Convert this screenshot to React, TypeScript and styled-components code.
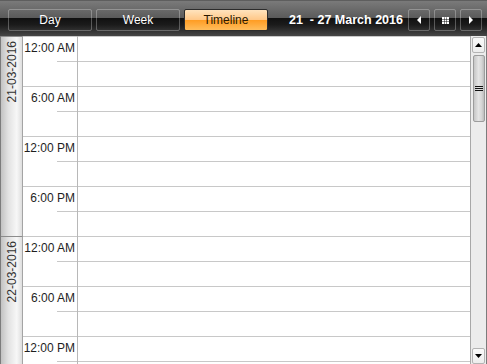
import React from 'react';
import styled, { createGlobalStyle, css } from 'styled-components';

const GlobalStyle = createGlobalStyle`
  html, body {
    margin: 0;
    padding: 0;
    background: #fff;
  }
  body {
    font-family: 'Liberation Sans', Arial, sans-serif;
  }
`;

const Frame = styled.div`
  width: 487px;
  height: 364px;
  overflow: hidden;
  display: flex;
  flex-direction: column;
  background: #fff;
`;

const Header = styled.div`
  height: 36px;
  flex: none;
  box-sizing: border-box;
  display: flex;
  align-items: flex-start;
  padding: 8px 5px 0 8px;
  background: linear-gradient(
    to bottom,
    #7a7a7a 0%,
    #5a5a5a 49%,
    #111111 50%,
    #1b1b1b 68%,
    #464646 100%
  );
  border-top: 1px solid #5e5e5e;
`;

const ViewButton = styled.div<{ $active?: boolean }>`
  width: 84px;
  height: 22px;
  box-sizing: border-box;
  margin-right: 4px;
  display: flex;
  align-items: center;
  justify-content: center;
  font-size: 12px;
  color: #fff;
  border: 1px solid rgba(255, 255, 255, 0.28);
  border-radius: 2px;
  ${(p) =>
    p.$active &&
    css`
      color: #2a1800;
      border-color: #2c2c2c;
      background: linear-gradient(
        to bottom,
        #ffe3bd 0%,
        #ffc889 48%,
        #ff9d24 52%,
        #ffbd5c 100%
      );
    `}
`;

const DateRange = styled.div`
  margin-left: 17px;
  height: 22px;
  display: flex;
  align-items: center;
  font-size: 12.5px;
  font-weight: bold;
  color: #fff;
  white-space: pre;
`;

const NavGroup = styled.div`
  margin-left: auto;
  display: flex;
  gap: 4px;
`;

const NavButton = styled.div`
  width: 22px;
  height: 22px;
  box-sizing: border-box;
  display: flex;
  align-items: center;
  justify-content: center;
  border: 1px solid rgba(255, 255, 255, 0.28);
  border-radius: 2px;
`;

const Body = styled.div`
  flex: 1;
  min-height: 0;
  display: flex;
  border-left: 1px solid #7c7c7c;
  border-right: 1px solid #7c7c7c;
`;

const Content = styled.div`
  flex: 1;
  overflow: hidden;
`;

const DayBlock = styled.div`
  display: flex;
`;

const DateCol = styled.div`
  width: 19px;
  flex: none;
  padding: 4px 0 0 2px;
  border-top: 1px solid #8c8c8c;
  border-right: 1px solid #a4a4a4;
  background: linear-gradient(
    to right,
    #c2c2c2 0%,
    #e2e2e2 35%,
    #f7f7f7 75%,
    #dedede 100%
  );
  display: flex;
  justify-content: center;
  align-items: flex-start;
`;

const DateLabel = styled.span`
  writing-mode: vertical-rl;
  transform: rotate(180deg);
  font-size: 12px;
  line-height: 19px;
  color: #333;
`;

const Slots = styled.div`
  flex: 1;
  display: flex;
  flex-direction: column;
`;

const Slot = styled.div`
  height: 25px;
  display: flex;
`;

const TimeCell = styled.div`
  width: 54px;
  flex: none;
  display: flex;
  flex-direction: column;
  border-right: 1px solid #b8b8b8;
`;

const TimeRule = styled.div<{ $major?: boolean }>`
  height: 1px;
  flex: none;
  background: #c8c8c8;
  margin-left: ${(p) => (p.$major ? '0' : '34px')};
`;

const TimeLabel = styled.div`
  text-align: right;
  padding: 3px 2px 0 0;
  font-size: 12px;
  line-height: 16px;
  color: #1e1e1e;
  white-space: nowrap;
`;

const MainCell = styled.div`
  flex: 1;
  border-top: 1px solid #c8c8c8;
`;

const ScrollBar = styled.div`
  width: 15px;
  flex: none;
  border-left: 1px solid #a8a8a8;
  background: #ececec;
  display: flex;
  flex-direction: column;
`;

const ArrowButton = styled.div`
  height: 16px;
  margin: 1px 1px 0 1px;
  box-sizing: border-box;
  border: 1px solid #b4b4b4;
  border-radius: 2px;
  background: linear-gradient(to bottom, #fafafa, #ededed);
  display: flex;
  align-items: center;
  justify-content: center;
`;

const Thumb = styled.div`
  height: 67px;
  margin: 2px 1px 0 2px;
  box-sizing: border-box;
  border: 1px solid #9c9c9c;
  border-radius: 2px;
  background: linear-gradient(
    to right,
    #c6c6c6 0%,
    #e4e4e4 45%,
    #d6d6d6 75%,
    #bdbdbd 100%
  );
  display: flex;
  flex-direction: column;
  align-items: center;
  justify-content: center;
  gap: 1px;
`;

const Grip = styled.div`
  width: 8px;
  height: 1px;
  background: #111;
`;

const Track = styled.div`
  flex: 1;
`;

const days = ['21-03-2016', '22-03-2016'];
const groups = ['12:00 AM', '6:00 AM', '12:00 PM', '6:00 PM'];

function Day({ date }: { date: string }) {
  return (
    <DayBlock>
      <DateCol>
        <DateLabel>{date}</DateLabel>
      </DateCol>
      <Slots>
        {groups.map((g) => (
          <React.Fragment key={g}>
            <Slot>
              <TimeCell>
                <TimeRule $major />
                <TimeLabel>{g}</TimeLabel>
              </TimeCell>
              <MainCell />
            </Slot>
            <Slot>
              <TimeCell>
                <TimeRule />
              </TimeCell>
              <MainCell />
            </Slot>
          </React.Fragment>
        ))}
      </Slots>
    </DayBlock>
  );
}

export default function App() {
  return (
    <Frame>
      <GlobalStyle />
      <Header>
        <ViewButton>Day</ViewButton>
        <ViewButton>Week</ViewButton>
        <ViewButton $active>Timeline</ViewButton>
        <DateRange>{'21  - 27 March 2016'}</DateRange>
        <NavGroup>
          <NavButton>
            <svg width="4" height="8" viewBox="0 0 4 8">
              <polygon points="4,0 4,8 0,4" fill="#fff" />
            </svg>
          </NavButton>
          <NavButton>
            <svg width="7" height="7" viewBox="0 0 7 7">
              {[0, 1, 2].map((r) =>
                [0, 1, 2].map((c) => (
                  <rect key={`${r}-${c}`} x={c * 2.5} y={r * 2.5} width="2" height="2" fill="#fff" />
                ))
              )}
            </svg>
          </NavButton>
          <NavButton>
            <svg width="4" height="8" viewBox="0 0 4 8">
              <polygon points="0,0 4,4 0,8" fill="#fff" />
            </svg>
          </NavButton>
        </NavGroup>
      </Header>
      <Body>
        <Content>
          {days.map((d) => (
            <Day key={d} date={d} />
          ))}
        </Content>
        <ScrollBar>
          <ArrowButton>
            <svg width="7" height="4" viewBox="0 0 7 4">
              <polygon points="0,4 3.5,0 7,4" fill="#000" />
            </svg>
          </ArrowButton>
          <Thumb>
            <Grip />
            <Grip />
            <Grip />
          </Thumb>
          <Track />
          <ArrowButton>
            <svg width="7" height="4" viewBox="0 0 7 4">
              <polygon points="0,0 7,0 3.5,4" fill="#000" />
            </svg>
          </ArrowButton>
        </ScrollBar>
      </Body>
    </Frame>
  );
}
